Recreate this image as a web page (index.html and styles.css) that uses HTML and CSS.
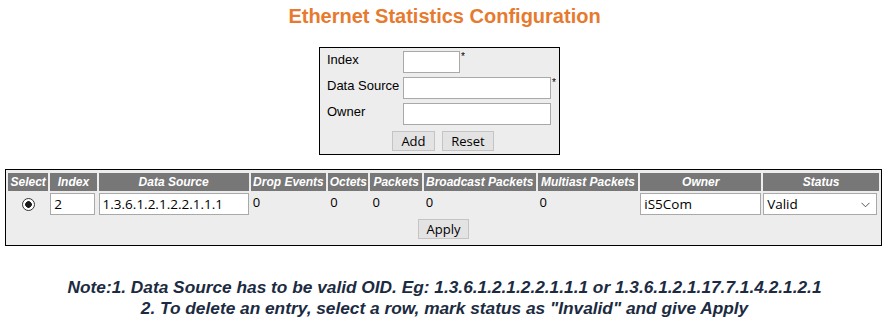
FILE: index.html
```html
<!DOCTYPE html>
<html lang="en">
<head>
    <meta charset="UTF-8">
    <title>Ethernet Statistics Configuration</title>
    <link rel="stylesheet" href="styles.css">
</head>
<body>
    <h1 class="page-title">Ethernet Statistics Configuration</h1>

    <form class="add-form">
        <table class="add-table">
            <tr>
                <td class="lbl">Index</td>
                <td><input type="text" class="in-short"><span class="req">*</span></td>
            </tr>
            <tr>
                <td class="lbl">Data Source</td>
                <td><input type="text" class="in-long"><span class="req">*</span></td>
            </tr>
            <tr>
                <td class="lbl">Owner</td>
                <td><input type="text" class="in-long"></td>
            </tr>
            <tr>
                <td colspan="2" class="btn-row">
                    <button type="button">Add</button>
                    <button type="reset">Reset</button>
                </td>
            </tr>
        </table>
    </form>

    <form class="list-form">
        <table class="stats-table">
            <colgroup>
                <col style="width:40px">
                <col style="width:46px">
                <col style="width:149px">
                <col style="width:75px">
                <col style="width:40px">
                <col style="width:51px">
                <col style="width:111px">
                <col style="width:100px">
                <col style="width:120px">
                <col style="width:115px">
            </colgroup>
            <tr class="head">
                <th>Select</th>
                <th>Index</th>
                <th>Data Source</th>
                <th>Drop Events</th>
                <th>Octets</th>
                <th>Packets</th>
                <th>Broadcast Packets</th>
                <th>Multiast Packets</th>
                <th>Owner</th>
                <th>Status</th>
            </tr>
            <tr class="row">
                <td class="center"><input type="radio" class="radio" name="sel" checked></td>
                <td><input type="text" class="cell-in idx-in" value="2"></td>
                <td><input type="text" class="cell-in" value="1.3.6.1.2.1.2.2.1.1.1"></td>
                <td class="num">0</td>
                <td class="num">0</td>
                <td class="num">0</td>
                <td class="num">0</td>
                <td class="num">0</td>
                <td><input type="text" class="cell-in" value="iS5Com"></td>
                <td>
                    <span class="sel-wrap">
                        <select class="cell-sel">
                            <option>Valid</option>
                            <option>Invalid</option>
                        </select>
                        <svg class="sel-arrow" width="9" height="6" viewBox="0 0 9 6">
                            <path d="M0.5 0.8 L4.5 4.8 L8.5 0.8" fill="none" stroke="#555" stroke-width="1"/>
                        </svg>
                    </span>
                </td>
            </tr>
            <tr>
                <td colspan="10" class="btn-row"><button type="button">Apply</button></td>
            </tr>
        </table>
    </form>

    <p class="note">Note:1. Data Source has to be valid OID. Eg: 1.3.6.1.2.1.2.2.1.1.1 or 1.3.6.1.2.1.17.7.1.4.2.1.2.1<br>
    2. To delete an entry, select a row, mark status as "Invalid" and give Apply</p>
</body>
</html>
```

FILE: styles.css
```css
body {
    margin: 0;
    padding: 0;
    background: #ffffff;
    font-family: "Liberation Sans", Arial, sans-serif;
    font-size: 13px;
    color: #000000;
}

.page-title {
    margin: 5px 0 0 0;
    text-align: center;
    font-size: 20px;
    line-height: 23px;
    color: #e67a2e;
}

.add-form {
    margin: 19px 0 0 0;
}

.add-table {
    margin: 0 0 0 319px;
    width: 241px;
    border: 1px solid #000000;
    background: #eeeded;
    border-spacing: 0;
    padding: 3px 0 1px 7px;
}

.add-table td {
    padding: 0;
    height: 26px;
    vertical-align: top;
}

.add-table .lbl {
    width: 76px;
    padding-top: 1px;
    height: 25px;
}

.req {
    font-size: 10px;
    vertical-align: top;
    margin-left: 1px;
}

input[type="text"] {
    box-sizing: border-box;
    height: 22px;
    border: 1px solid #a9a9a9;
    background: #ffffff;
    font-family: "Open Sans", "Liberation Sans", sans-serif;
    font-size: 13.5px;
    padding: 0 3px;
    margin: 0;
}

.in-short {
    width: 57px;
}

.in-long {
    width: 148px;
}

button {
    box-sizing: border-box;
    height: 20px;
    padding: 0 8px;
    border: 1px solid #c4c4c4;
    background: #e3e3e3;
    font-family: "Open Sans", "Liberation Sans", sans-serif;
    font-size: 13px;
    line-height: 18px;
    color: #000000;
    margin: 0 2px;
}

.add-table .btn-row {
    text-align: center;
    padding: 2px 0 0 0;
    height: 22px;
}

.list-form {
    margin: 14px 0 0 5px;
}

.stats-table {
    table-layout: fixed;
    width: 877px;
    border: 1px solid #000000;
    background: #eeeded;
    border-spacing: 2px;
    padding: 1px 0 2px 0;
}

.stats-table th {
    background: #777777;
    color: #ffffff;
    font-style: italic;
    font-weight: bold;
    font-size: 12px;
    height: 18px;
    padding: 0;
    white-space: nowrap;
    overflow: hidden;
}

.stats-table td {
    padding: 0;
    vertical-align: top;
}

.stats-table .row td {
    height: 22px;
}

.stats-table .num {
    padding: 1px 0 0 2px;
    font-family: "Open Sans", "Liberation Sans", sans-serif;
    font-size: 13px;
    line-height: 16px;
}

.stats-table .center {
    text-align: center;
}

.radio {
    appearance: none;
    box-sizing: border-box;
    width: 13px;
    height: 13px;
    margin: 5px 0 0 0;
    border: 1px solid #333333;
    border-radius: 50%;
    background: radial-gradient(circle, #1a1a1a 0 3px, #ffffff 3.6px);
}

.cell-in {
    width: 100%;
}

.idx-in {
    margin-left: 1px;
    width: 45px;
}

.sel-wrap {
    position: relative;
    display: inline-block;
}

.cell-sel {
    appearance: none;
    box-sizing: border-box;
    width: 114px;
    height: 22px;
    border: 1px solid #a9a9a9;
    border-radius: 0;
    background: #ffffff;
    font-family: "Open Sans", "Liberation Sans", sans-serif;
    font-size: 13.5px;
    padding: 0 3px;
    color: #000000;
}

.sel-arrow {
    position: absolute;
    right: 7px;
    top: 9px;
}

.stats-table .btn-row {
    text-align: center;
    padding-top: 1px;
    height: 22px;
}

.note {
    margin: 31px 0 0 0;
    text-align: center;
    font-weight: bold;
    font-style: italic;
    font-size: 17.3px;
    line-height: 21px;
    color: #1c2b41;
}
```
